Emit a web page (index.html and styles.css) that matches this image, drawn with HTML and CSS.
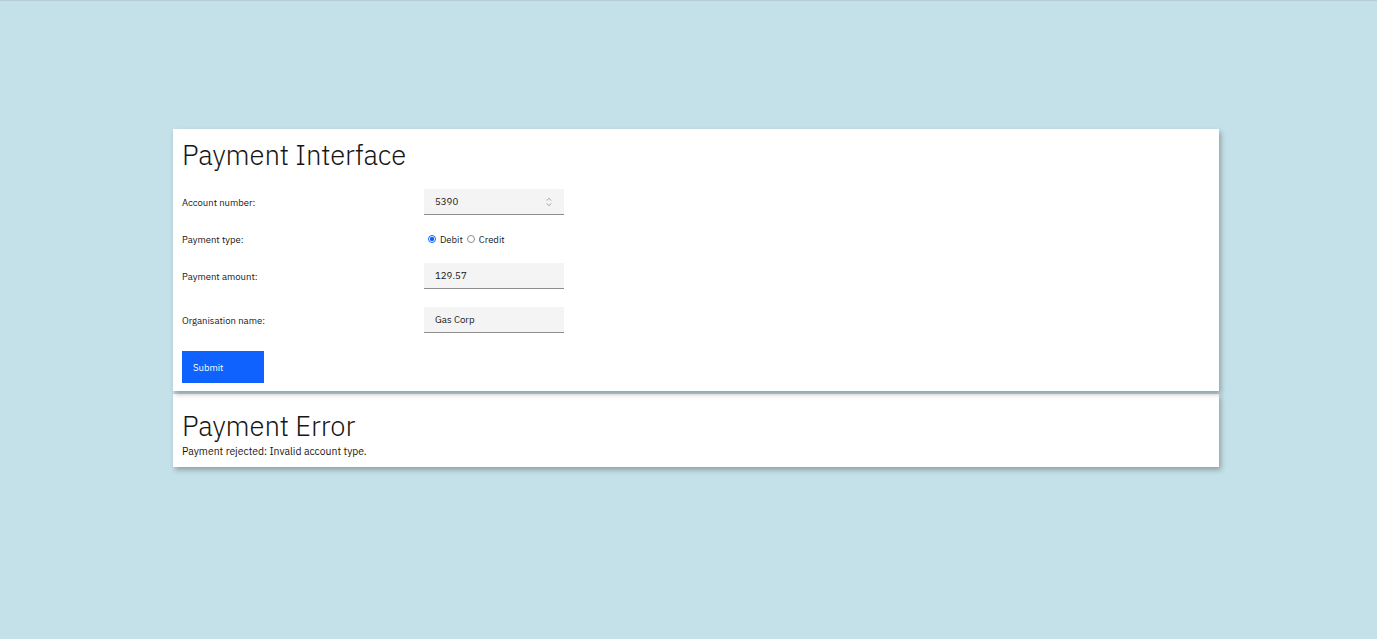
FILE: index.html
```html
<!DOCTYPE html>
<html>
<head>
<meta charset="utf-8">
<link rel="stylesheet" href="styles.css">
</head>
<body>
<div class="page">
  <section class="card card-main">
    <h1 class="title">Payment Interface</h1>
    <div class="form">
      <div class="row row-account">
        <span class="label">Account number:</span>
        <div class="input">
          <span class="value">5390</span>
          <svg class="spin" width="8" height="12" viewBox="0 0 8 12"><path d="M1.8 4.6 L4 2.2 L6.2 4.6 M1.8 7.4 L4 9.8 L6.2 7.4" fill="none" stroke="#9a9a9a" stroke-width="0.9"/></svg>
        </div>
      </div>
      <div class="row row-type">
        <span class="label">Payment type:</span>
        <div class="radios">
          <span class="radio radio-on"></span><span class="rtext">Debit</span>
          <span class="radio"></span><span class="rtext">Credit</span>
        </div>
      </div>
      <div class="row row-amount">
        <span class="label">Payment amount:</span>
        <div class="input"><span class="value">129.57</span></div>
      </div>
      <div class="row row-org">
        <span class="label">Organisation name:</span>
        <div class="input"><span class="value">Gas Corp</span></div>
      </div>
      <button class="btn">Submit</button>
    </div>
  </section>
  <section class="card card-error">
    <h1 class="title">Payment Error</h1>
    <p class="msg">Payment rejected: Invalid account type.</p>
  </section>
</div>
</body>
</html>
```
FILE: styles.css
```css
html, body {
  margin: 0;
  padding: 0;
}
body {
  background: #c4e0e8;
  font-family: "IBM Plex Sans", "Noto Sans", "Open Sans", sans-serif;
  color: #161616;
  border-top: 1px solid #b5ccd5;
  height: 638px;
  overflow: hidden;
}
.page {
  padding-top: 128px;
  padding-left: 173px;
  width: 1046px;
}
.card {
  background: #fff;
  position: relative;
  box-shadow: 2px 3px 5px rgba(0, 0, 0, 0.28);
}
.card-main {
  z-index: 2;
  height: 262px;
  padding: 0 9px;
  box-sizing: border-box;
}
.card-error {
  z-index: 1;
  margin-top: 3px;
  height: 73px;
  padding: 0 9px;
  box-sizing: border-box;
}
.title {
  margin: 0;
  font-weight: 300;
  font-size: 27.5px;
  line-height: 36px;
  letter-spacing: -0.1px;
}
.card-main .title {
  padding-top: 8px;
}
.card-error .title {
  padding-top: 14px;
  line-height: 37px;
}
.form {
  display: flex;
  flex-direction: column;
  align-items: flex-start;
  padding-top: 16px;
}
.row {
  display: flex;
  align-items: center;
}
.label {
  width: 242px;
  font-size: 9.5px;
}
.input {
  width: 140px;
  height: 26px;
  box-sizing: border-box;
  background: #f4f4f4;
  border-bottom: 1px solid #8d8d8d;
  display: flex;
  align-items: center;
  justify-content: space-between;
  padding: 0 11px;
}
.value {
  font-size: 9.7px;
}
.row-type {
  margin-top: 16px;
  height: 16px;
}
.row-amount {
  margin-top: 16px;
}
.row-org {
  margin-top: 18px;
}
.radios {
  display: flex;
  align-items: center;
  padding-left: 4px;
}
.radio {
  width: 6px;
  height: 6px;
  border-radius: 50%;
  border: 1px solid #8d8d8d;
  box-sizing: content-box;
  margin-right: 4px;
}
.radio-on {
  border-color: #0f62fe;
  background: radial-gradient(circle, #0f62fe 0 2px, #fff 2.3px);
}
.rtext {
  font-size: 9.5px;
  margin-right: 4px;
}
.btn {
  margin-top: 18px;
  width: 82px;
  height: 32px;
  border: 0;
  background: #0f62fe;
  color: #fff;
  font-family: inherit;
  font-size: 9.5px;
  text-align: left;
  padding: 0 0 0 11px;
}
.msg {
  margin: 0;
  font-size: 10.4px;
  line-height: 12px;
}
```
